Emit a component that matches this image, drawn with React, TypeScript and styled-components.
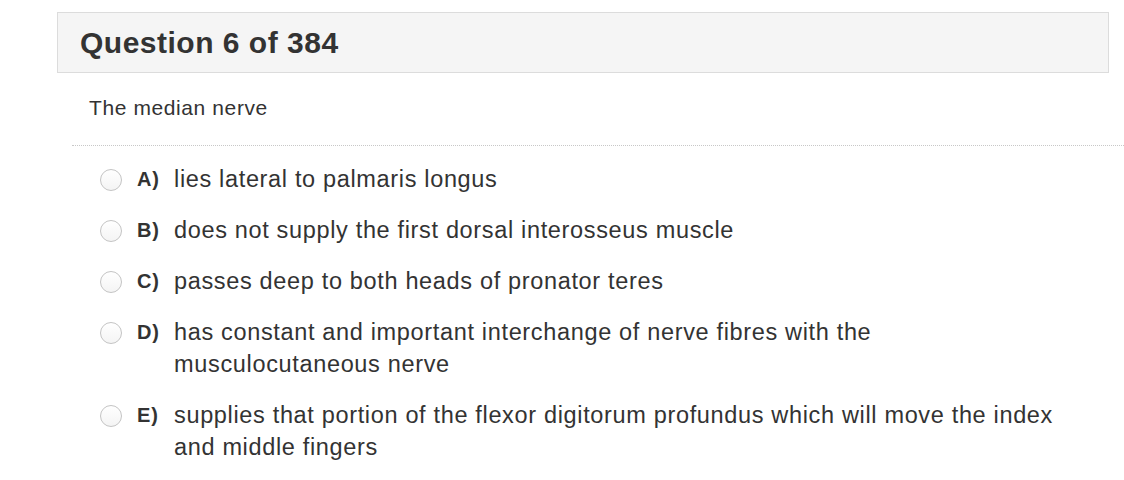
import React from "react";
import styled, { createGlobalStyle } from "styled-components";

const Global = createGlobalStyle`
  html, body { margin: 0; padding: 0; background: #fff; }
  body { font-family: "Liberation Sans", Arial, Helvetica, sans-serif; color: #333; }
`;

const Page = styled.div`
  width: 1124px;
  padding: 12px 0 0 57px;
  box-sizing: border-box;
`;

const Header = styled.div`
  width: 1052px;
  height: 61px;
  box-sizing: border-box;
  background: #f5f5f5;
  border: 1px solid #dcdcdc;
  display: flex;
  align-items: center;
  padding-left: 22px;
`;

const Title = styled.h1`
  margin: 0;
  font-size: 30px;
  font-weight: 700;
  color: #333;
  letter-spacing: 0.5px;
`;

const Prompt = styled.p`
  margin: 22px 0 0 32px;
  font-size: 21px;
  line-height: 26px;
  letter-spacing: 0.6px;
  color: #333;
`;

const Divider = styled.div`
  margin: 24px 0 0 15px;
  border-top: 1px dotted #c8c8c8;
`;

const Options = styled.ul`
  list-style: none;
  margin: 17px 0 0 43px;
  padding: 0;
  display: flex;
  flex-direction: column;
  gap: 19px;
`;

const Option = styled.li`
  display: flex;
  align-items: flex-start;
  font-size: 23.5px;
  line-height: 32px;
  letter-spacing: 0.66px;
  color: #333;
`;

const Radio = styled.span`
  flex: none;
  width: 22px;
  height: 22px;
  box-sizing: border-box;
  border-radius: 50%;
  border: 1px solid #c4c4c4;
  background: linear-gradient(#fff, #f4f4f4);
  margin-top: 6px;
  margin-right: 15px;
`;

const Letter = styled.span`
  flex: none;
  width: 37px;
  font-weight: 700;
  font-size: 20px;
  letter-spacing: 0.8px;
`;

const Text = styled.span`
  width: 886px;
`;

const options = [
  ["A)", "lies lateral to palmaris longus"],
  ["B)", "does not supply the first dorsal interosseus muscle"],
  ["C)", "passes deep to both heads of pronator teres"],
  ["D)", "has constant and important interchange of nerve fibres with the musculocutaneous nerve"],
  ["E)", "supplies that portion of the flexor digitorum profundus which will move the index and middle fingers"],
];

export default function App() {
  return (
    <>
      <Global />
      <Page>
        <Header>
          <Title>Question 6 of 384</Title>
        </Header>
        <Prompt>The median nerve</Prompt>
        <Divider />
        <Options>
          {options.map(([l, t]) => (
            <Option key={l}>
              <Radio />
              <Letter>{l}</Letter>
              <Text>{t}</Text>
            </Option>
          ))}
        </Options>
      </Page>
    </>
  );
}
